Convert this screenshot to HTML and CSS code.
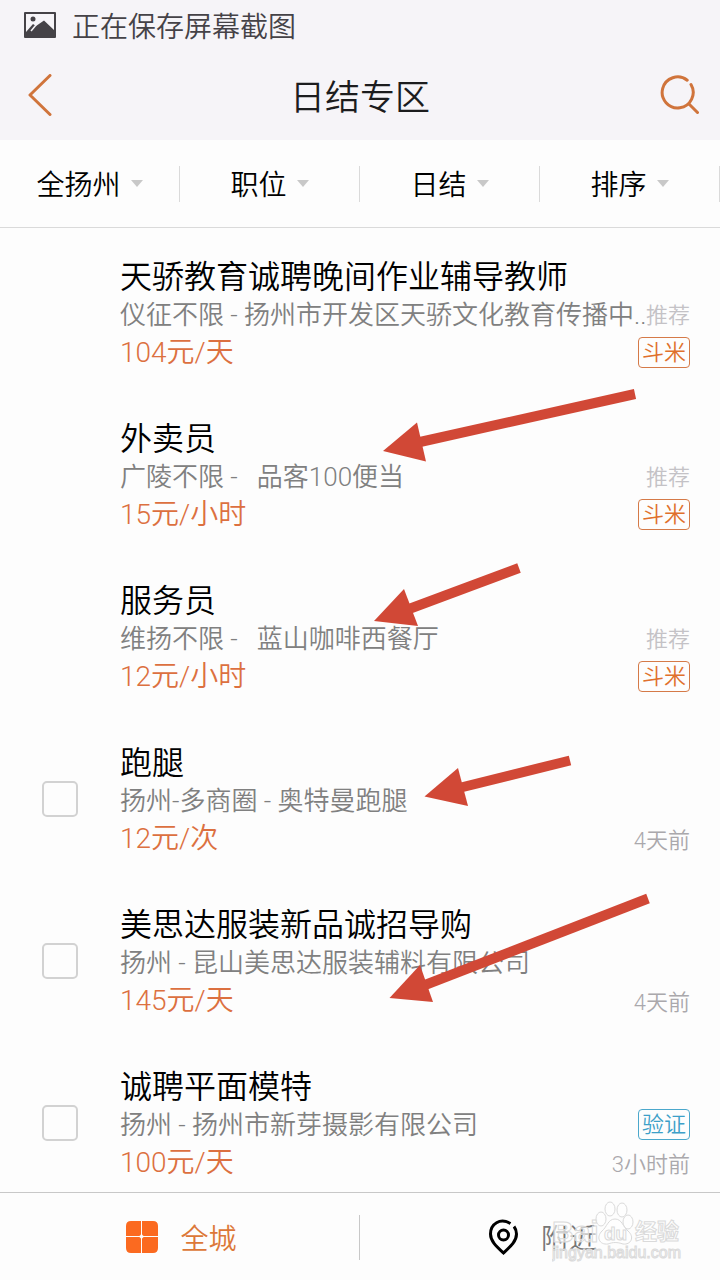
FILE: index.html
```html
<!DOCTYPE html>
<html lang="zh-CN">
<head>
<meta charset="utf-8">
<meta name="viewport" content="width=device-width, initial-scale=1">
<title>日结专区</title>
<link rel="stylesheet" href="styles.css">
</head>
<body>
<div class="app">
  <div class="status">
    <svg class="status-icon" width="32" height="26" viewBox="0 0 32 26" aria-hidden="true">
      <path fill="#454247" fill-rule="evenodd" d="M1 0H31Q32 0 32 1V25Q32 26 31 26H1Q0 26 0 25V1Q0 0 1 0ZM2 2V20L9 12L12 14L20 8.500L30 18V2Z"/>
      <circle cx="9" cy="7" r="2.500" fill="#454247"/>
      <path d="M7 19L12 13" stroke="#f6f4f8" stroke-width="1.500"/>
    </svg>
    <span>正在保存屏幕截图</span>
  </div>
  <header class="header">
    <button class="icon-button" type="button" aria-label="返回">
      <svg width="24" height="42" viewBox="0 0 24 42" fill="none" stroke="#d0743c" stroke-width="3" stroke-linecap="round" stroke-linejoin="round"><path d="M22 1.500L2 21L22 40.500"/></svg>
    </button>
    <h1 class="header-title">日结专区</h1>
    <button class="icon-button icon-button-end" type="button" aria-label="搜索">
      <svg width="40" height="40" viewBox="0 0 40 40" fill="none" stroke="#d0743c" stroke-width="3" stroke-linecap="round"><path d="M27.200 5.200A15.500 15.500 0 1 0 31 9.500M28.500 28.500L37.500 37.500"/></svg>
    </button>
  </header>
  <nav class="filters">
    <button class="filter" type="button">全扬州<span class="caret"></span></button>
    <button class="filter" type="button">职位<span class="caret"></span></button>
    <button class="filter" type="button">日结<span class="caret"></span></button>
    <button class="filter" type="button">排序<span class="caret"></span></button>
  </nav>
  <main class="list">
    <article class="job">
      <div class="job-check"></div>
      <div class="job-main">
        <h2 class="job-title">天骄教育诚聘晚间作业辅导教师</h2>
        <p class="job-place">仪征不限 - 扬州市开发区天骄文化教育传播中..</p>
        <p class="job-pay">104元/天</p>
      </div>
      <div class="job-side"><span class="promo">推荐</span><span class="tag">斗米</span></div>
    </article>
    <article class="job">
      <div class="job-check"></div>
      <div class="job-main">
        <h2 class="job-title">外卖员</h2>
        <p class="job-place">广陵不限 -&nbsp;&nbsp; 品客100便当</p>
        <p class="job-pay">15元/小时</p>
      </div>
      <div class="job-side"><span class="promo">推荐</span><span class="tag">斗米</span></div>
    </article>
    <article class="job">
      <div class="job-check"></div>
      <div class="job-main">
        <h2 class="job-title">服务员</h2>
        <p class="job-place">维扬不限 -&nbsp;&nbsp; 蓝山咖啡西餐厅</p>
        <p class="job-pay">12元/小时</p>
      </div>
      <div class="job-side"><span class="promo">推荐</span><span class="tag">斗米</span></div>
    </article>
    <article class="job">
      <div class="job-check"><input class="check" type="checkbox" aria-labelledby="job-4"></div>
      <div class="job-main">
        <h2 class="job-title" id="job-4">跑腿</h2>
        <p class="job-place">扬州-多商圈 - 奥特曼跑腿</p>
        <p class="job-pay">12元/次</p>
      </div>
      <div class="job-side"><span class="time">4天前</span></div>
    </article>
    <article class="job">
      <div class="job-check"><input class="check" type="checkbox" aria-labelledby="job-5"></div>
      <div class="job-main">
        <h2 class="job-title" id="job-5">美思达服装新品诚招导购</h2>
        <p class="job-place">扬州 - 昆山美思达服装辅料有限公司</p>
        <p class="job-pay">145元/天</p>
      </div>
      <div class="job-side"><span class="time">4天前</span></div>
    </article>
    <article class="job">
      <div class="job-check"><input class="check" type="checkbox" aria-labelledby="job-6"></div>
      <div class="job-main">
        <h2 class="job-title" id="job-6">诚聘平面模特</h2>
        <p class="job-place">扬州 - 扬州市新芽摄影有限公司</p>
        <p class="job-pay">100元/天</p>
      </div>
      <div class="job-side"><span class="tag tag-verified">验证</span><span class="time">3小时前</span></div>
    </article>
  </main>
  <footer class="tabs">
    <button class="tab tab-active" type="button">
      <svg width="32" height="32" viewBox="0 0 32 32" fill="#fb6a20" aria-hidden="true">
        <path d="M5 0H15V13Q15 15 13 15H0V5Q0 0 5 0ZM16 0H27Q32 0 32 5V15H18Q16 15 16 13ZM0 16H13Q15 16 15 18V32H5Q0 32 0 27ZM18 16H32V27Q32 32 27 32H16V18Q16 16 18 16Z"/>
        <circle cx="15.500" cy="15.500" r="1.500" fill="#fdfdfd"/>
      </svg>
      <span>全城</span>
    </button>
    <button class="tab" type="button">
      <svg width="32" height="36" viewBox="0 0 32 36" fill="none" stroke="#000" stroke-width="3" aria-hidden="true">
        <path d="M23.500 4.500C13 -1.500 3.500 5 3.500 15C3.500 22 9 27 16.500 34C24 27 29.500 22 29.500 15C29.500 12 28.500 9.500 27 7.500"/>
        <circle cx="16.500" cy="16" r="5"/>
      </svg>
      <span>附近</span>
    </button>
  </footer>

  <svg class="arrows" width="720" height="1280" viewBox="0 0 720 1280" fill="#d14836" aria-hidden="true">
    <g stroke="#d14836" stroke-width="10">
      <path d="M420 442L635 394"/>
      <path d="M409 609L519 568"/>
      <path d="M461 787.500L570 760.500"/>
      <path d="M425 985L648 898.500"/>
    </g>
    <path d="M383 451L417 422.500L426 461.500Z"/>
    <path d="M374 621L404 589L418 626Z"/>
    <path d="M424.500 796.500L458 768L468 806Z"/>
    <path d="M389.500 998L420 965L433 1002Z"/>
  </svg>
  <svg class="watermark" width="132" height="66" viewBox="0 0 132 66" aria-hidden="true">
    <g fill="#fff" fill-opacity=".6" stroke="#dadada" stroke-width="1">
      <text class="wm-brand" x="0" y="42">Bai</text>
      <ellipse cx="58" cy="9" rx="5" ry="7"/>
      <ellipse cx="70" cy="10" rx="5" ry="7"/>
      <ellipse cx="49" cy="19" rx="5" ry="7"/>
      <ellipse cx="76" cy="22" rx="5" ry="7"/>
      <path d="M63 19C70 19 71 27 76 31C83 37 79 45 71 44C65 42 61 42 56 44C47 45 44 37 50 31C55 27 56 19 63 19Z"/>
      <text class="wm-du" x="52" y="40">du</text>
      <text class="wm-cn" x="83" y="39">经验</text>
      <text class="wm-url" x="0" y="58">jingyan.baidu.com</text>
    </g>
  </svg>
</div>
</body>
</html>
```
FILE: styles.css
```css
* {
  box-sizing: border-box;
}

body {
  margin: 0;
  background: #fdfdfd;
  color: #000;
  font-family: Roboto, "Noto Sans CJK SC", sans-serif;
  font-weight: 350;
}

h1, h2, p {
  margin: 0;
  font-weight: 350;
}

button {
  margin: 0;
  padding: 0;
  border: 0;
  background: none;
  color: inherit;
  font: inherit;
}

svg {
  display: block;
  flex: none;
}

.app {
  position: relative;
  display: flex;
  flex-direction: column;
  height: 100vh;
  overflow: hidden;
}

.status {
  display: flex;
  align-items: center;
  gap: 16px;
  flex: none;
  height: 50px;
  padding: 0 24px;
  background: #f6f4f8;
  color: #454247;
  font-size: 28px;
}

.header {
  display: flex;
  align-items: center;
  justify-content: space-between;
  flex: none;
  height: 90px;
  padding: 0 20px 0 28px;
  background: #f6f4f8;
}

.icon-button {
  display: flex;
  align-items: center;
  width: 40px;
  height: 60px;
}

.icon-button-end {
  justify-content: flex-end;
  width: 48px;
}

.header-title {
  padding-bottom: 2px;
  color: #1c1c1e;
  font-size: 35px;
}

.filters {
  display: grid;
  grid-template-columns: repeat(4, 1fr);
  flex: none;
  padding: 26px 0 25px;
  border-bottom: 1px solid #dadada;
}

.filter {
  display: flex;
  align-items: center;
  justify-content: center;
  gap: 10px;
  height: 36px;
  padding-bottom: 2px;
  border-right: 1px solid #dadada;
  font-size: 28px;
}

.caret {
  border: 6px solid transparent;
  border-top: 7px solid #c8c8c8;
  border-bottom: 0;
}

.list {
  flex: 1;
  min-height: 0;
  padding-top: 4px;
  overflow: hidden;
}

.job {
  display: flex;
  padding-right: 30px;
}

.job-check {
  display: flex;
  align-items: center;
  justify-content: center;
  flex: none;
  width: 120px;
}

.check {
  appearance: none;
  width: 36px;
  height: 36px;
  margin: 0;
  border: 2px solid #d2d2d2;
  border-radius: 5px;
}

.job-main {
  flex: 1;
  min-width: 0;
  padding: 26px 0 22px;
  line-height: 38px;
  white-space: nowrap;
}

.job-title {
  font-size: 32px;
}

.job-place {
  color: #808080;
  font-size: 26px;
}

.job-pay {
  color: #dc7040;
  font-size: 28px;
}

.job-side {
  display: flex;
  flex-direction: column;
  align-items: flex-end;
  justify-content: flex-end;
  gap: 8px;
  flex: none;
  padding-bottom: 26px;
  font-size: 22px;
  line-height: 26px;
}

.promo {
  color: #c4c2c6;
}

.time {
  padding-top: 4px;
  color: #aaa8ac;
}

.tag {
  padding: 2px 3px 1px;
  border: 1px solid #d57a48;
  border-radius: 4px;
  color: #e0702c;
}

.tag-verified {
  border-color: #4ba8cc;
  color: #3ca0c8;
}

.tabs {
  display: grid;
  grid-template-columns: 1fr 1fr;
  flex: none;
  padding: 22px 0 20px;
  border-top: 1px solid #c8c8c8;
}

.tab {
  display: flex;
  align-items: center;
  justify-content: center;
  gap: 22px;
  height: 45px;
  padding: 0 0 2px 4px;
  color: #777;
  font-size: 28px;
}

.tab-active {
  border-right: 1px solid #c8c8c8;
  color: #dc7838;
}

.arrows {
  position: absolute;
  top: 0;
  left: 0;
  pointer-events: none;
}

.watermark {
  position: absolute;
  right: 36px;
  bottom: 14px;
  pointer-events: none;
}

.wm-brand {
  font: 700 30px "Liberation Sans", sans-serif;
}

.wm-du {
  font: 700 19px "Liberation Sans", sans-serif;
}

.wm-cn {
  font: 700 22px "Noto Sans CJK SC", sans-serif;
}

.wm-url {
  font: 400 16px "Liberation Sans", sans-serif;
}
```
